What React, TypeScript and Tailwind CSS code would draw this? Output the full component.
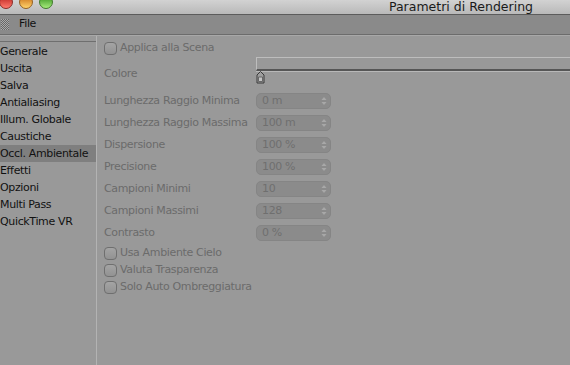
import { ReactNode } from "react";

const font = { fontFamily: '"DejaVu Sans", Verdana, sans-serif' };

const sections = [
  "Generale",
  "Uscita",
  "Salva",
  "Antialiasing",
  "Illum. Globale",
  "Caustiche",
  "Occl. Ambientale",
  "Effetti",
  "Opzioni",
  "Multi Pass",
  "QuickTime VR",
];

const fields = [
  { label: "Lunghezza Raggio Minima", value: "0 m" },
  { label: "Lunghezza Raggio Massima", value: "100 m" },
  { label: "Dispersione", value: "100 %" },
  { label: "Precisione", value: "100 %" },
  { label: "Campioni Minimi", value: "10" },
  { label: "Campioni Massimi", value: "128" },
  { label: "Contrasto", value: "0 %" },
];

const Check = ({ children }: { children: ReactNode }) => (
  <div className="flex items-center h-[17px] gap-[3px]">
    <div className="w-[13px] h-[13px] rounded-[4px] border border-[#6f6f6f] bg-gradient-to-b from-[#a4a4a4] to-[#929292]" />
    <span>{children}</span>
  </div>
);

const Spin = ({ value }: { value: string }) => (
  <div className="w-[75px] h-[16px] rounded-[5px] bg-[#8b8b8b] border border-[#858585] flex items-center justify-between pl-[5px] pr-[3px]">
    <span className="text-[#6f6f6f]">{value}</span>
    <svg width="6" height="10" viewBox="0 0 6 10">
      <path d="M3 1 L5.5 4 L0.5 4 Z" fill="#a8a8a8" />
      <path d="M3 9 L5.5 6 L0.5 6 Z" fill="#a8a8a8" />
    </svg>
  </div>
);

export default function App() {
  return (
    <div
      className="w-[570px] h-[365px] overflow-hidden flex flex-col bg-[#999999] text-[11px] tracking-[-0.35px]"
      style={font}
    >
      {/* TITLE BAR */}
      <div className="h-[15px] shrink-0 flex items-start bg-gradient-to-b from-[#d2d2d2] to-[#b9b9b9] border-b border-[#5c5c5c]">
        <div className="flex gap-[6px] -mt-[5px] -ml-[1px]">
          <div className="w-[14px] h-[14px] rounded-full bg-gradient-to-b from-[#b9141a] to-[#ff7a6e] border border-[#8a2a26]" />
          <div className="w-[14px] h-[14px] rounded-full bg-gradient-to-b from-[#c66b06] to-[#ffd36a] border border-[#946020]" />
          <div className="w-[14px] h-[14px] rounded-full bg-gradient-to-b from-[#2f8f14] to-[#a6ec7c] border border-[#3f7a2a]" />
        </div>
        <div className="flex-1 text-right pr-[37px] text-[12.5px] leading-[14px] tracking-normal text-[#1a1a1a]">
          Parametri di Rendering
        </div>
      </div>

      {/* MENU BAR */}
      <div className="h-[20px] shrink-0 flex items-center bg-[#8a8a8a] border-b border-[#6c6c6c]">
        <div className="w-[8px] h-[11px] ml-[1px] bg-[conic-gradient(#666_25%,#ababab_0_50%,#666_0_75%,#ababab_0)] bg-[length:2px_2px]" />
        <span className="ml-[10px] text-[#111]">File</span>
      </div>

      <div className="h-px bg-[#a8a8a8] shrink-0" />

      {/* BODY */}
      <div className="flex flex-1">
        <div className="w-[97px] shrink-0 border-r border-[#b3b3b3] pt-[5px]">
          <div className="border-t border-[#6f6f6f] pt-[1px]">
            {sections.map((s) => (
              <div
                key={s}
                className={`h-[17px] leading-[17px] whitespace-nowrap text-[#111] ${
                  s === "Occl. Ambientale" ? "bg-[#7f7f7f]" : ""
                }`}
              >
                {s}
              </div>
            ))}
          </div>
        </div>

        <div className="flex-1 pl-[7px] pt-[4px] text-[#6b6b6b]">
          <Check>Applica alla Scena</Check>

          <div className="flex">
            <div className="w-[152px] pt-[9px]">Colore</div>
            <div className="flex-1 flex flex-col">
              <div className="h-[14px] border-t border-l border-[#bdbdbd] border-b-2 border-b-[#565656]" />
              <div className="h-px bg-[#b8b8b8]" />
              <svg width="10" height="14" viewBox="0 0 10 14" className="-mt-[2px]">
                <path d="M1 5 L4.5 1.5 L8 5 L8 13 L1 13 Z" fill="#9e9e9e" stroke="#3a3a3a" />
                <path d="M2.5 7 L6.5 7 L6.5 11.5 L2.5 11.5 Z" fill="#c4c4c4" stroke="#555" strokeWidth="0.8" />
              </svg>
            </div>
          </div>

          <div className="mt-[6px]">
            {fields.map((f) => (
              <div key={f.label} className="flex items-center h-[22px]">
                <div className="w-[152px] whitespace-nowrap">{f.label}</div>
                <Spin value={f.value} />
              </div>
            ))}
          </div>

          <div className="mt-[1px]">
            <Check>Usa Ambiente Cielo</Check>
            <Check>Valuta Trasparenza</Check>
            <Check>Solo Auto Ombreggiatura</Check>
          </div>
        </div>
      </div>
    </div>
  );
}
